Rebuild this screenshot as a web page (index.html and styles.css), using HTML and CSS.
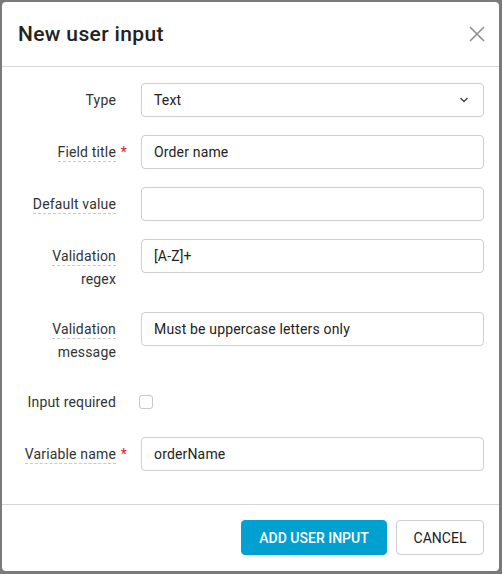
FILE: index.html
```html
<!DOCTYPE html>
<html>
<head>
<meta charset="utf-8">
<link rel="stylesheet" href="styles.css">
</head>
<body>
<div class="dialog">
  <div class="header">
    <h1 class="title">New user input</h1>
    <button class="close" aria-label="Close">
      <svg width="16" height="16" viewBox="0 0 16 16"><path d="M1 1L15 15M15 1L1 15" stroke="#8a8a8a" stroke-width="1.5" fill="none"/></svg>
    </button>
  </div>
  <div class="body">
    <div class="row">
      <div class="label"><span>Type</span></div>
      <div class="control">
        <div class="select">
          <span>Text</span>
          <svg width="10" height="6" viewBox="0 0 10 6"><path d="M1.5 1L5 4.5L8.5 1" stroke="#444" stroke-width="1.4" fill="none"/></svg>
        </div>
      </div>
    </div>
    <div class="row">
      <div class="label"><span class="hint">Field title</span><i class="req">*</i></div>
      <div class="control"><div class="input">Order name</div></div>
    </div>
    <div class="row">
      <div class="label"><span class="hint">Default value</span></div>
      <div class="control"><div class="input"></div></div>
    </div>
    <div class="row">
      <div class="label"><span class="hint">Validation</span><br>regex</div>
      <div class="control"><div class="input">[A-Z]+</div></div>
    </div>
    <div class="row">
      <div class="label"><span class="hint">Validation</span><br>message</div>
      <div class="control"><div class="input">Must be uppercase letters only</div></div>
    </div>
    <div class="row">
      <div class="label"><span>Input required</span></div>
      <div class="control check-wrap"><span class="checkbox"></span></div>
    </div>
    <div class="row">
      <div class="label"><span class="hint">Variable name</span><i class="req">*</i></div>
      <div class="control"><div class="input">orderName</div></div>
    </div>
  </div>
  <div class="footer">
    <button class="btn primary">ADD USER INPUT</button>
    <button class="btn secondary">CANCEL</button>
  </div>
</div>
</body>
</html>
```

FILE: styles.css
```css
html, body {
  margin: 0;
  padding: 0;
}
body {
  background: #7a7a7a;
  width: 502px;
  height: 574px;
  overflow: hidden;
  font-family: Roboto, "Liberation Sans", sans-serif;
}
.dialog {
  margin: 2px 0 0 2px;
  width: 497px;
  height: 569px;
  background: #fff;
  border-radius: 4px;
  display: flex;
  flex-direction: column;
  box-sizing: border-box;
}
.header {
  height: 65px;
  box-sizing: border-box;
  border-bottom: 1px solid #d6d6d6;
  display: flex;
  align-items: center;
  justify-content: space-between;
  padding: 0 13px 0 16px;
  flex: none;
}
.title {
  margin: 0;
  font-size: 21px;
  font-weight: 500;
  color: #222;
  letter-spacing: 0.35px;
}
.close {
  border: 0;
  background: none;
  padding: 0;
  width: 18px;
  height: 18px;
  display: flex;
  align-items: center;
  justify-content: center;
}
.body {
  padding: 16px 15px 15px 16px;
  border-bottom: 1px solid #d6d6d6;
  flex: none;
}
.row {
  display: flex;
  margin-bottom: 18px;
  min-height: 34px;
}
.label {
  width: 110px;
  flex: none;
  box-sizing: border-box;
  padding: 6px 12px 3px 0;
  text-align: right;
  font-size: 14px;
  letter-spacing: 0.16px;
  line-height: 23px;
  color: #333;
  position: relative;
}
.hint {
  border-bottom: 1px dashed #c8c8c8;
  padding-bottom: 1px;
}
.req {
  position: absolute;
  right: 1px;
  top: 6px;
  font-style: normal;
  color: #e02020;
  font-size: 14px;
}
.control {
  flex: 1;
  margin-left: 13px;
}
.input, .select {
  height: 34px;
  box-sizing: border-box;
  border: 1px solid #cfcfcf;
  border-radius: 4px;
  padding: 0 12px;
  font-size: 14px;
  letter-spacing: 0.16px;
  line-height: 32px;
  color: #222;
}
.select {
  display: flex;
  align-items: center;
  justify-content: space-between;
  padding-right: 14px;
}
.check-wrap {
  display: flex;
  align-items: center;
  margin-left: 11px;
}
.checkbox {
  width: 14px;
  height: 14px;
  box-sizing: border-box;
  border: 1px solid #c8c8c8;
  border-radius: 3px;
}
.footer {
  display: flex;
  justify-content: flex-end;
  gap: 9px;
  padding: 15px 15px 15px 16px;
}
.btn {
  height: 35px;
  box-sizing: border-box;
  border-radius: 4px;
  font-family: Roboto, "Liberation Sans", sans-serif;
  font-size: 14px;
  font-weight: 500;
  padding: 0 16px;
}
.primary {
  width: 146px;
  background: #00a0d0;
  border: 1px solid #00a0d0;
  color: #fff;
}
.secondary {
  width: 88px;
  background: #fff;
  border: 1px solid #cfcfcf;
  color: #222;
  font-weight: 400;
}
```
